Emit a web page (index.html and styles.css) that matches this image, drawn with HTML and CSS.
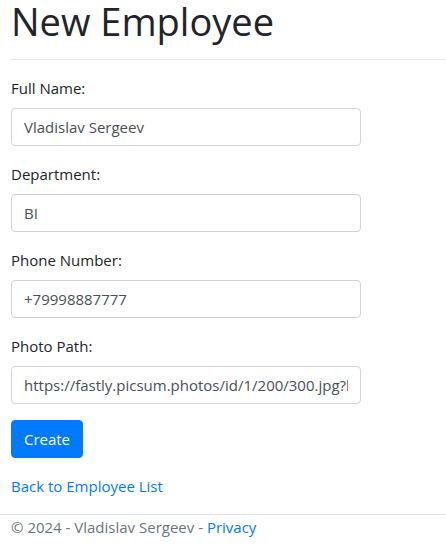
FILE: index.html
```html
<!DOCTYPE html>
<html lang="en">
<head>
<meta charset="utf-8">
<title>New Employee</title>
<link rel="stylesheet" href="styles.css">
</head>
<body>
<main class="page">
  <h1 class="title">New Employee</h1>
  <hr class="rule">
  <form class="form">
    <div class="form-group">
      <label class="label" for="name">Full Name:</label>
      <input class="input" id="name" type="text" value="Vladislav Sergeev">
    </div>
    <div class="form-group">
      <label class="label" for="dept">Department:</label>
      <input class="input" id="dept" type="text" value="BI">
    </div>
    <div class="form-group">
      <label class="label" for="phone">Phone Number:</label>
      <input class="input" id="phone" type="text" value="+79998887777">
    </div>
    <div class="form-group">
      <label class="label" for="photo">Photo Path:</label>
      <input class="input" id="photo" type="text" value="https://fastly.picsum.photos/id/1/200/300.jpg?hmac=jH5bDkLr6Tgy3oAg5khKCHeunSMHq0UYT1q6Q4cVYJ8">
    </div>
    <div class="form-group">
      <button class="btn" type="button">Create</button>
    </div>
  </form>
  <div class="back"><a class="link" href="#">Back to Employee List</a></div>
</main>
<footer class="footer">
  <div class="footer-inner">&copy; 2024 - Vladislav Sergeev - <a class="link" href="#">Privacy</a></div>
</footer>
</body>
</html>
```
FILE: styles.css
```css
* { box-sizing: border-box; }
html, body { margin: 0; padding: 0; }
body {
  font-family: "Open Sans", "Noto Sans", sans-serif;
  font-size: 15px;
  line-height: 24px;
  color: #212529;
  background: #fff;
  width: 446px;
  overflow: hidden;
}
.page { padding: 0 0 0 11px; }
.title {
  margin: 0;
  font-size: 38px;
  line-height: 43px;
  font-weight: 400;
}
.rule {
  margin: 16px 0 16px;
  border: 0;
  border-top: 1px solid rgba(0,0,0,.1);
  height: 0;
}
.form { margin: 0; }
.form-group { margin-bottom: 16px; }
.label {
  display: block;
  margin-bottom: 8px;
  line-height: 24px;
}
.input {
  display: block;
  width: 350px;
  height: 38px;
  padding: 6px 12px;
  font-family: inherit;
  font-size: 15px;
  line-height: 24px;
  color: #495057;
  background: #fff;
  border: 1px solid #ced4da;
  border-radius: 4px;
}
.btn {
  display: inline-block;
  width: 72px;
  height: 38px;
  padding: 6px 0;
  font-family: inherit;
  font-size: 15px;
  line-height: 24px;
  color: #fff;
  background: #007bff;
  border: 1px solid #007bff;
  border-radius: 4px;
}
.back { margin: 0; }
.link { color: #007bff; text-decoration: none; }
.footer {
  margin-top: 16px;
  border-top: 1px solid #dee2e6;
  color: #6c757d;
}
.footer-inner { padding-left: 11px; line-height: 24px; }
```
